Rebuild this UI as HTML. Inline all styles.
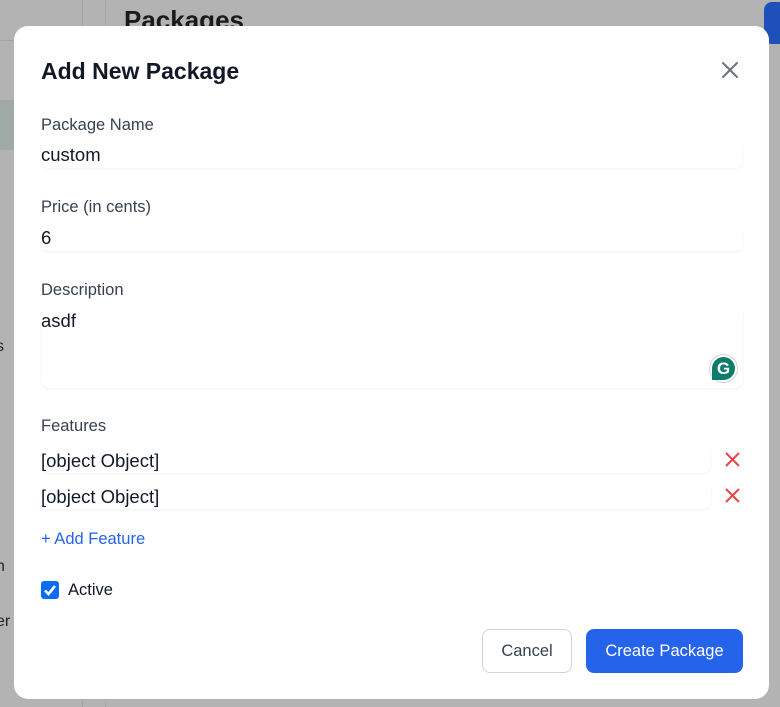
<!DOCTYPE html>
<html><head><meta charset="utf-8"><style>
*{box-sizing:border-box;margin:0;padding:0}
html,body{width:780px;height:707px;overflow:hidden}
body{background:#b3b3b3;font-family:"Liberation Sans",Arial,sans-serif;position:relative;color:#111827}
.vl{position:absolute;top:0;bottom:0;width:1px;background:#a3a3a3}
.modal{position:absolute;left:14px;top:26px;width:755px;height:673px;background:#fff;border-radius:14px}
h1{position:absolute;left:27px;top:32px;font-size:23px;font-weight:bold;color:#111827}
.close{position:absolute;left:705px;top:33px}
.lbl{position:absolute;left:27px;font-size:16.5px;color:#374151}
.inp{position:absolute;left:27px;width:702px;border-radius:8px;box-shadow:0 1px 2px rgba(0,0,0,.06);font-size:18.5px;color:#111827}
.x{position:absolute;left:711px}
.btn{position:absolute;top:603px;height:44px;border-radius:8px;font-size:16.5px;display:flex;align-items:center;justify-content:center}
</style></head><body>
<div class="vl" style="left:82px"></div>
<div style="position:absolute;left:0;top:40px;width:82px;height:1px;background:#a3a3a3"></div>
<div style="position:absolute;left:0;top:100px;width:14px;height:50px;background:#9fa9a5"></div>
<div style="position:absolute;left:105px;top:-10px;width:700px;height:730px;border:1px solid #a8a8a8;border-radius:14px"></div>
<div style="position:absolute;left:124px;top:5px;font-size:26px;font-weight:bold;color:#1a1a1a">Packages</div>
<div style="position:absolute;left:764px;top:2px;width:30px;height:42px;background:#1f4fb8;border-radius:8px"></div>
<div style="position:absolute;left:-4px;top:338px;font-size:16px;color:#222">s</div>
<div style="position:absolute;left:-4px;top:558px;font-size:16px;color:#222">n</div>
<div style="position:absolute;left:-4px;top:613px;font-size:16px;color:#222">er</div>
<div class="modal">
<h1>Add New Package</h1>
<svg class="close" width="22" height="22" viewBox="0 0 22 22"><path d="M4 4L18 18M18 4L4 18" stroke="#6b7280" stroke-width="2" stroke-linecap="round"/></svg>
<div class="lbl" style="top:90px">Package Name</div>
<div class="inp" style="top:114px;height:28px;line-height:30px">custom</div>
<div class="lbl" style="top:172px">Price (in cents)</div>
<div class="inp" style="top:197px;height:28px;line-height:30px">6</div>
<div class="lbl" style="top:255px">Description</div>
<div class="inp" style="top:280px;height:82px;line-height:29px">asdf</div>
<div style="position:absolute;left:695px;top:328px;width:29px;height:29px;border-radius:50%;background:#fff;border:1px solid #d1d5db"></div>
<div style="position:absolute;left:698px;top:331px;width:23px;height:23px;border-radius:50% 50% 50% 0;background:#0f7c6b;color:#fff;font-weight:bold;font-size:17px;text-align:center;line-height:23px">G</div>
<div class="lbl" style="top:391px">Features</div>
<div class="inp" style="top:420px;width:670px;height:27px;line-height:29px">[object Object]</div>
<div class="inp" style="top:456px;width:670px;height:27px;line-height:29px">[object Object]</div>
<svg class="x" style="top:426px" width="15" height="15" viewBox="0 0 15 15"><path d="M1 1L14 14M14 1L1 14" stroke="#ef4444" stroke-width="2"/></svg>
<svg class="x" style="top:462px" width="15" height="15" viewBox="0 0 15 15"><path d="M1 1L14 14M14 1L1 14" stroke="#ef4444" stroke-width="2"/></svg>
<div style="position:absolute;left:27px;top:504px;font-size:16.5px;color:#2563eb">+ Add Feature</div>
<div style="position:absolute;left:27px;top:555px;width:18px;height:18px;border-radius:3px;background:#0b6cf5"><svg width="18" height="18" viewBox="0 0 18 18"><path d="M4 9.5L7.5 13L14 5" stroke="#fff" stroke-width="2.6" fill="none"/></svg></div>
<div style="position:absolute;left:54px;top:555px;font-size:16.5px;color:#111827">Active</div>
<div class="btn" style="left:468px;width:90px;border:1px solid #d1d5db;color:#374151">Cancel</div>
<div class="btn" style="left:572px;width:157px;background:#2563eb;color:#fff">Create Package</div>
</div>
</body></html>
